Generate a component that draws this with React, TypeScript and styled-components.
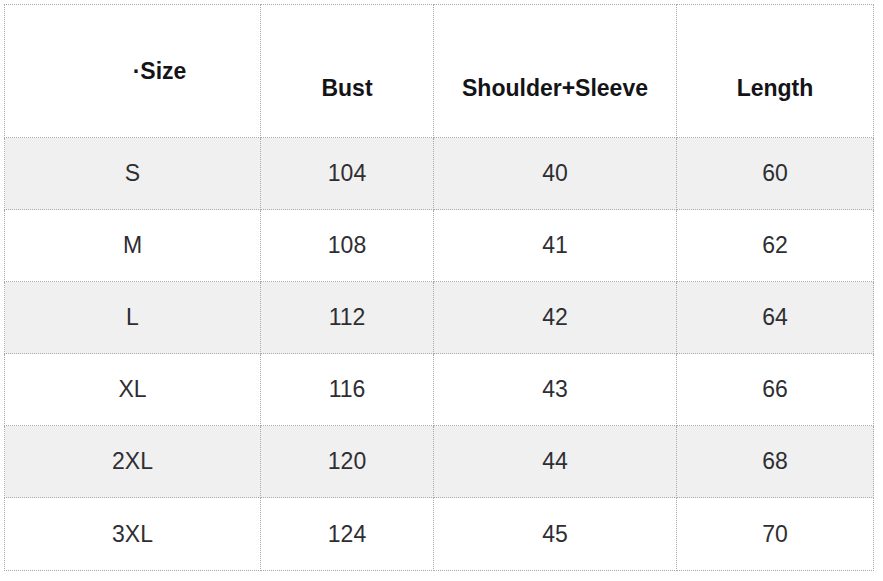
import React from 'react';
import styled, { createGlobalStyle } from 'styled-components';

interface SizeRow {
    size: string;
    bust: number;
    shoulder: number;
    length: number;
}

const rows: SizeRow[] = [
    { size: 'S', bust: 104, shoulder: 40, length: 60 },
    { size: 'M', bust: 108, shoulder: 41, length: 62 },
    { size: 'L', bust: 112, shoulder: 42, length: 64 },
    { size: 'XL', bust: 116, shoulder: 43, length: 66 },
    { size: '2XL', bust: 120, shoulder: 44, length: 68 },
    { size: '3XL', bust: 124, shoulder: 45, length: 70 },
];

const App = () => {
    return (
        <Page>
            <GlobalStyle />
            <Table>
                <colgroup>
                    <col style={{ width: 256 }} />
                    <col style={{ width: 173 }} />
                    <col style={{ width: 243 }} />
                    <col style={{ width: 197 }} />
                </colgroup>
                <thead>
                    <tr>
                        <HeadCell $offsetLeft={54}>·Size</HeadCell>
                        <HeadCell $offsetTop={34}>Bust</HeadCell>
                        <HeadCell $offsetTop={34}>Shoulder+Sleeve</HeadCell>
                        <HeadCell $offsetTop={34}>Length</HeadCell>
                    </tr>
                </thead>
                <tbody>
                    {rows.map((row, i) => (
                        <Row key={row.size} $shaded={i % 2 === 0} $last={i === rows.length - 1}>
                            <Cell>{row.size}</Cell>
                            <Cell>{row.bust}</Cell>
                            <Cell>{row.shoulder}</Cell>
                            <Cell>{row.length}</Cell>
                        </Row>
                    ))}
                </tbody>
            </Table>
        </Page>
    );
};

const GlobalStyle = createGlobalStyle`
    html, body {
        margin: 0;
        padding: 0;
        background: #ffffff;
    }
`;
const Page = styled.div`
    padding: 4px 0 0 4px;
    font-family: 'Liberation Sans', Arial, sans-serif;
`;
const Table = styled.table`
    border-collapse: collapse;
    table-layout: fixed;
    width: 870px;
    border: 1px dotted #aaaaaa;
`;
const HeadCell = styled.th<{ $offsetTop?: number; $offsetLeft?: number }>`
    height: 133px;
    padding: ${(p) => p.$offsetTop || 0}px 0 0 ${(p) => p.$offsetLeft || 0}px;
    border: 1px dotted #aaaaaa;
    font-size: 23px;
    font-weight: bold;
    color: #141418;
    text-align: center;
    vertical-align: middle;
    box-sizing: border-box;
`;
const Row = styled.tr<{ $shaded: boolean; $last: boolean }>`
    height: ${(p) => (p.$last ? 73 : 72)}px;
    background: ${(p) => (p.$shaded ? '#f0f0f0' : '#ffffff')};
`;
const Cell = styled.td`
    padding: 0;
    border: 1px dotted #aaaaaa;
    font-size: 23px;
    color: #2e2e32;
    text-align: center;
    vertical-align: middle;
`;

export default App;
